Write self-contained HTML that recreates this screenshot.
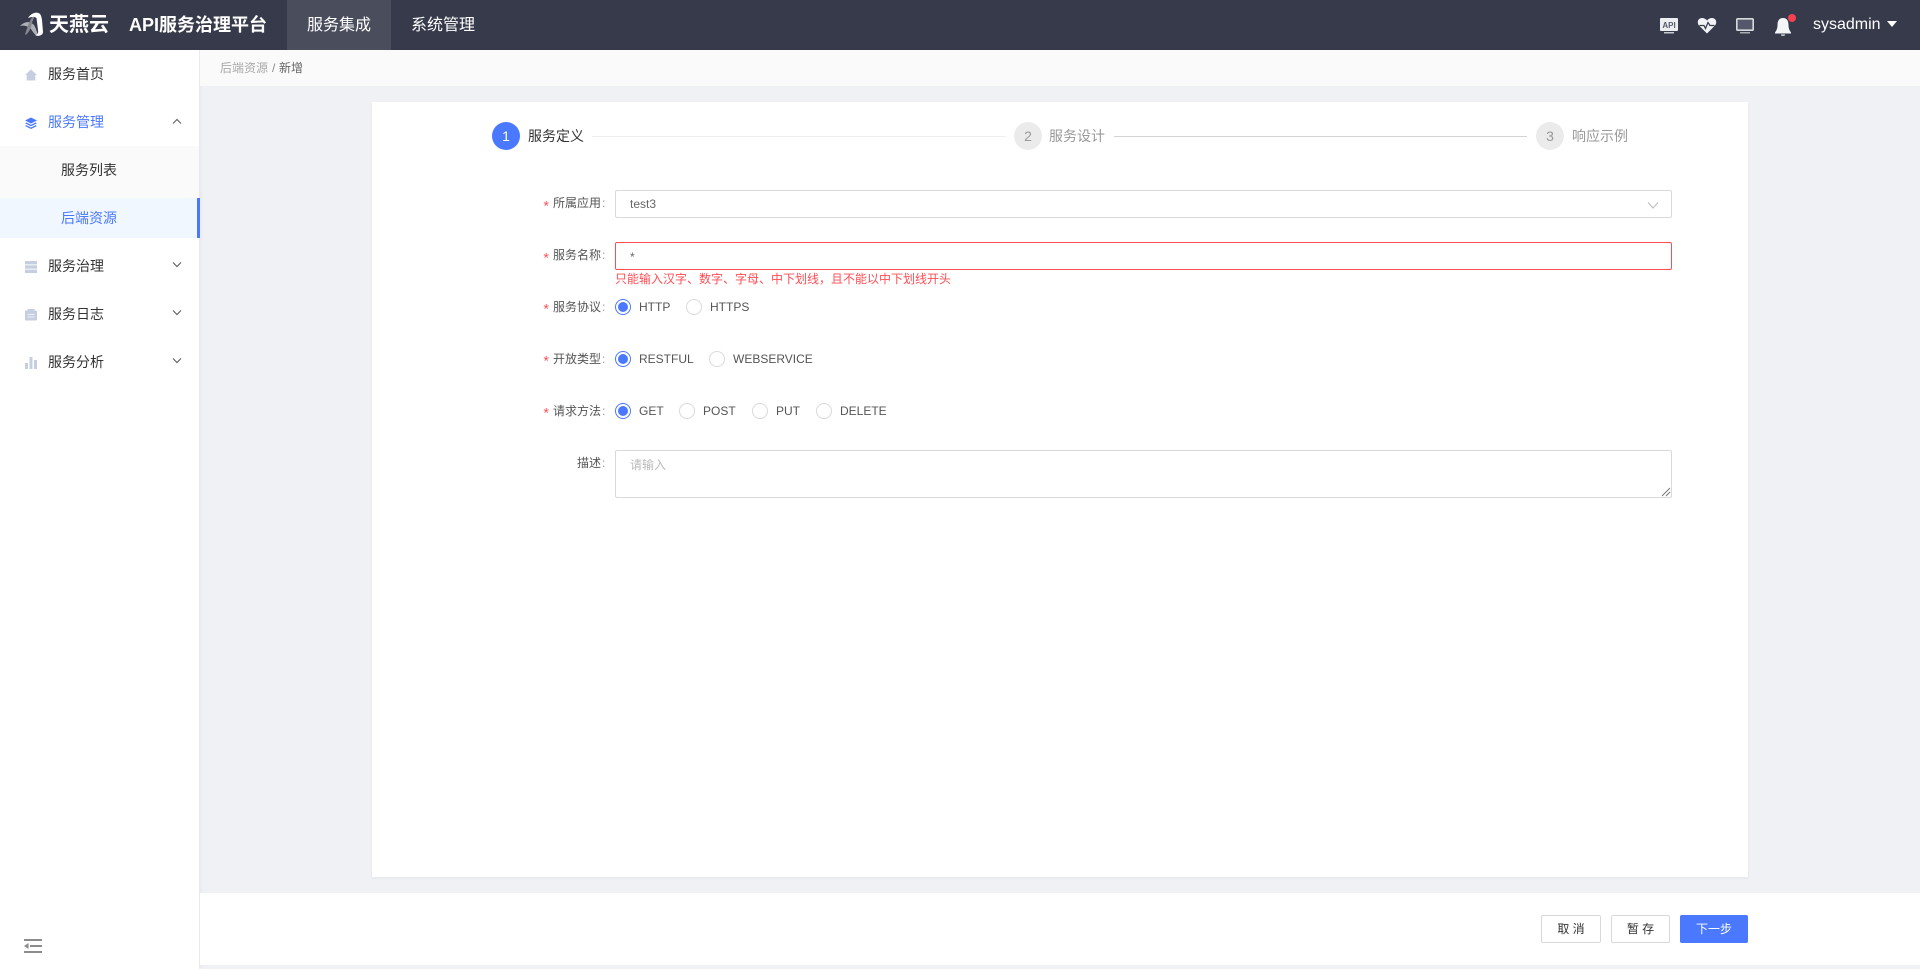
<!DOCTYPE html>
<html lang="zh-CN">
<head>
<meta charset="utf-8">
<title>API服务治理平台</title>
<style>
*{box-sizing:border-box;margin:0;padding:0}
html,body{width:1920px;height:969px;overflow:hidden;background:#f0f1f5}
body{position:relative;font-family:"Liberation Sans","Noto Sans CJK SC",sans-serif;font-size:12px;color:#333}
.a{position:absolute;white-space:nowrap}
.hd{left:0;top:0;width:1920px;height:50px;background:#363a4a}
.side{left:0;top:50px;width:199px;height:919px;background:#fff;box-shadow:2px 0 3px rgba(60,60,100,.05)}
.mi{font-size:14px;line-height:20px;color:#333}
.lb{font-size:12px;line-height:16px;color:#555;left:553px}
.lb i{position:absolute;left:49px;top:0;font-style:normal;color:#999}
.st{color:#ff4d55;left:542px;font-size:14px;line-height:16px;font-family:"Liberation Mono",monospace}
.r{width:16px;height:16px;border-radius:50%;border:1px solid #d9d9d9;background:#fff}
.r.on{border-color:#4a78ff}
.r.on:after{content:"";position:absolute;left:2px;top:2px;width:10px;height:10px;border-radius:50%;background:#4a78ff}
.rt{font-size:12px;line-height:16px;color:#555}
.ipt{left:615px;width:1057px;height:28px;border:1px solid #d9d9d9;border-radius:2px;background:#fff}
.c{width:28px;height:28px;border-radius:50%;top:122px;text-align:center;line-height:28px;font-size:14px;background:#ebebeb;color:#999}
.sl{font-size:14px;line-height:20px;top:126px;color:#999}
.btn{top:915px;height:28px;border:1px solid #d9d9d9;border-radius:2px;background:#fff;text-align:center;line-height:26px;font-size:12px;color:#333}
</style>
</head>
<body>
<div class="a hd"></div>
<div class="a" style="left:287px;top:0;width:104px;height:50px;background:#4a4d5c"></div>
<svg class="a" style="left:16px;top:8px" width="32" height="32" viewBox="0 0 32 32"><path d="M4 18 C9 13 14 13 18 17 C20 20 21 25 23 28 C19 28 17 24 15 21 C12 18 8 17 4 18Z" fill="#aeb0b8"/><path d="M17 8 C14 12 11 19 9 27 C12 26 14 22 15 19 C16 15 17 11 19 8Z" fill="#85878f"/><path d="M12 10 C15 5 21 3 24 6 C25 7 25.500 9 26 12 L27 24 C27 27 23 29 19 27 C22 27 22.500 25 22 22 L20.500 10 C18 8 15 9 12 10Z" fill="#fff"/></svg>
<div class="a" style="left:49px;top:11px;font-size:20px;line-height:28px;font-weight:700;color:#fff">天燕云</div>
<div class="a" style="left:129px;top:12px;font-size:18px;line-height:26px;font-weight:700;color:#fff">API服务治理平台</div>
<div class="a" style="left:307px;top:14px;font-size:16px;line-height:24px;color:#fff">服务集成</div>
<div class="a" style="left:411px;top:14px;font-size:16px;line-height:24px;color:#fff">系统管理</div>

<svg class="a" style="left:1659px;top:17px" width="20" height="18" viewBox="0 0 20 18"><rect x="1" y="1" width="18" height="13" rx="1" fill="#eceef2"/><rect x="5" y="15" width="10" height="1.500" fill="#c8cad2"/><text x="10" y="11" font-size="8" font-weight="700" text-anchor="middle" fill="#5a5d6b" font-family="Liberation Sans">API</text></svg>
<svg class="a" style="left:1697px;top:16px" width="20" height="19" viewBox="0 0 20 19"><path d="M10 17.500 L2 9.500 C-.5 6.500 1 2 5 2 C7 2 9 3 10 4.500 C11 3 13 2 15 2 C19 2 20.500 6.500 18 9.500Z" fill="#f2f3f6"/><path d="M2.500 9.500 H7 L8.500 12.500 L11 6.500 L13 9.500 H17.500" fill="none" stroke="#363a4a" stroke-width="1.200"/></svg>
<svg class="a" style="left:1735px;top:17px" width="20" height="18" viewBox="0 0 20 18"><rect x="1.800" y="1.800" width="16.400" height="11.400" rx="1" fill="#55586a" stroke="#d8d9de" stroke-width="1.600"/><rect x="5" y="15" width="10" height="1.500" fill="#a9abb5"/></svg>
<svg class="a" style="left:1773px;top:16px" width="20" height="22" viewBox="0 0 20 22"><path d="M10 2 C14 2 15.500 5 15.500 9 C15.500 13 17 15 18 16.500 V17.500 H2 V16.500 C3 15 4.500 13 4.500 9 C4.500 5 6 2 10 2Z" fill="#f4f5f7"/><path d="M8 18.500 H12 V19 C12 20 8 20 8 19Z" fill="#f4f5f7"/></svg>
<div class="a" style="left:1788px;top:14px;width:8px;height:8px;border-radius:50%;background:#f5414f"></div>
<div class="a" style="left:1813px;top:15px;font-size:16px;line-height:20px;color:#fff">sysadmin</div>
<div class="a" style="left:1887px;top:21px;width:0;height:0;border-left:5.500px solid transparent;border-right:5.500px solid transparent;border-top:6px solid #fff"></div>

<div class="a side"></div>
<div class="a" style="left:0;top:146px;width:199px;height:52px;background:#fafafa"></div>
<div class="a" style="left:0;top:198px;width:200px;height:40px;background:#f0f7ff"></div>
<div class="a" style="left:197px;top:198px;width:3px;height:40px;background:#4a78ff"></div>

<svg class="a" style="left:25px;top:69px" width="12" height="12" viewBox="0 0 12 12"><path d="M6 .5 L12 6 H10.300 V11.500 H1.700 V6 H0Z" fill="#c5cfe0"/></svg>
<svg class="a" style="left:25px;top:117px" width="12" height="12" viewBox="0 0 12 12"><path d="M6 .5 L12 3.500 L6 6.500 L0 3.500Z" fill="#4a78ff"/><path d="M1.500 5.500 L6 7.800 L10.500 5.500 L12 6.300 L6 9.300 L0 6.300Z" fill="#4a78ff"/><path d="M1.500 8.200 L6 10.500 L10.500 8.200 L12 9 L6 12 L0 9Z" fill="#4a78ff"/></svg>
<svg class="a" style="left:25px;top:261px" width="12" height="12" viewBox="0 0 12 12"><rect y="0" width="12" height="3.400" fill="#c5cfe0"/><rect y="4.300" width="12" height="3.400" fill="#c5cfe0"/><rect y="8.600" width="12" height="3.400" fill="#c5cfe0"/></svg>
<svg class="a" style="left:25px;top:309px" width="12" height="12" viewBox="0 0 12 12"><rect y="1.500" width="12" height="10" rx="1" fill="#c5cfe0"/><rect x="2.500" y="0" width="7" height="2" fill="#c5cfe0"/><rect x="2.500" y="5" width="7" height="1" fill="#eef1f6"/><rect x="2.500" y="7.500" width="7" height="1" fill="#eef1f6"/></svg>
<svg class="a" style="left:25px;top:357px" width="12" height="12" viewBox="0 0 12 12"><rect x="0" y="6" width="3" height="6" fill="#c5cfe0"/><rect x="4.500" y="0" width="3" height="12" fill="#c5cfe0"/><rect x="9" y="3" width="3" height="9" fill="#c5cfe0"/></svg>

<div class="a mi" style="left:48px;top:64px">服务首页</div>
<div class="a mi" style="left:48px;top:112px;color:#4a78ff">服务管理</div>
<div class="a mi" style="left:61px;top:160px">服务列表</div>
<div class="a mi" style="left:61px;top:208px;color:#4a78ff">后端资源</div>
<div class="a mi" style="left:48px;top:256px">服务治理</div>
<div class="a mi" style="left:48px;top:304px">服务日志</div>
<div class="a mi" style="left:48px;top:352px">服务分析</div>

<svg class="a" style="left:172px;top:118px" width="10" height="7" viewBox="0 0 10 7"><path d="M1 5.500 L5 1.500 L9 5.500" fill="none" stroke="#666" stroke-width="1.200"/></svg>
<svg class="a" style="left:172px;top:261px" width="10" height="7" viewBox="0 0 10 7"><path d="M1 1.500 L5 5.500 L9 1.500" fill="none" stroke="#666" stroke-width="1.200"/></svg>
<svg class="a" style="left:172px;top:309px" width="10" height="7" viewBox="0 0 10 7"><path d="M1 1.500 L5 5.500 L9 1.500" fill="none" stroke="#666" stroke-width="1.200"/></svg>
<svg class="a" style="left:172px;top:357px" width="10" height="7" viewBox="0 0 10 7"><path d="M1 1.500 L5 5.500 L9 1.500" fill="none" stroke="#666" stroke-width="1.200"/></svg>

<svg class="a" style="left:24px;top:938px" width="18" height="16" viewBox="0 0 18 16"><rect y="1" width="18" height="2" fill="#8c8c8c"/><rect x="6" y="7" width="12" height="2" fill="#8c8c8c"/><rect y="13" width="18" height="2" fill="#8c8c8c"/><path d="M0 8 L4.500 5 V11Z" fill="#8c8c8c"/></svg>

<div class="a" style="left:200px;top:50px;width:1720px;height:36px;background:#fafafa"></div>
<div class="a" style="left:220px;top:60px;font-size:12px;line-height:16px;color:#aaa">后端资源</div>
<div class="a" style="left:272px;top:60px;font-size:12px;line-height:16px;color:#888">/</div>
<div class="a" style="left:279px;top:60px;font-size:12px;line-height:16px;color:#666">新增</div>

<div class="a" style="left:372px;top:102px;width:1376px;height:775px;background:#fff;box-shadow:0 1px 3px rgba(0,0,0,.05)"></div>

<div class="a c" style="left:492px;background:#4a78ff;color:#fff">1</div>
<div class="a sl" style="left:528px;color:#333">服务定义</div>
<div class="a" style="left:592px;top:136px;width:414px;height:1px;background:#eee"></div>
<div class="a c" style="left:1014px">2</div>
<div class="a sl" style="left:1049px">服务设计</div>
<div class="a" style="left:1114px;top:136px;width:413px;height:1px;background:#d4d4d4"></div>
<div class="a c" style="left:1536px">3</div>
<div class="a sl" style="left:1572px">响应示例</div>

<div class="a st" style="top:200px">*</div><div class="a lb" style="top:195px">所属应用<i>:</i></div>
<div class="a ipt" style="top:190px"></div>
<div class="a" style="left:630px;top:196px;line-height:16px;color:#666">test3</div>
<svg class="a" style="left:1647px;top:202px" width="12" height="7" viewBox="0 0 12 7"><path d="M1 .5 L6 6 L11 .5" fill="none" stroke="#bbb" stroke-width="1"/></svg>

<div class="a st" style="top:252px">*</div><div class="a lb" style="top:247px">服务名称<i>:</i></div>
<div class="a ipt" style="top:242px;border-color:#ff4d55"></div>
<div class="a" style="left:630px;top:249px;line-height:16px;color:#666">*</div>
<div class="a" style="left:615px;top:271px;line-height:16px;color:#ff4d55">只能输入汉字、数字、字母、中下划线，且不能以中下划线开头</div>

<div class="a st" style="top:303px">*</div><div class="a lb" style="top:299px">服务协议<i>:</i></div>
<div class="a r on" style="left:615px;top:299px"></div><div class="a rt" style="left:639px;top:299px">HTTP</div>
<div class="a r" style="left:686px;top:299px"></div><div class="a rt" style="left:710px;top:299px">HTTPS</div>

<div class="a st" style="top:355px">*</div><div class="a lb" style="top:351px">开放类型<i>:</i></div>
<div class="a r on" style="left:615px;top:351px"></div><div class="a rt" style="left:639px;top:351px">RESTFUL</div>
<div class="a r" style="left:709px;top:351px"></div><div class="a rt" style="left:733px;top:351px">WEBSERVICE</div>

<div class="a st" style="top:407px">*</div><div class="a lb" style="top:403px">请求方法<i>:</i></div>
<div class="a r on" style="left:615px;top:403px"></div><div class="a rt" style="left:639px;top:403px">GET</div>
<div class="a r" style="left:679px;top:403px"></div><div class="a rt" style="left:703px;top:403px">POST</div>
<div class="a r" style="left:752px;top:403px"></div><div class="a rt" style="left:776px;top:403px">PUT</div>
<div class="a r" style="left:816px;top:403px"></div><div class="a rt" style="left:840px;top:403px">DELETE</div>

<div class="a lb" style="top:455px;left:577px">描述<i style="left:25px">:</i></div>
<div class="a ipt" style="top:450px;height:48px"></div>
<div class="a" style="left:630px;top:457px;line-height:16px;color:#bbb">请输入</div>
<svg class="a" style="left:1661px;top:487px" width="10" height="10" viewBox="0 0 10 10"><path d="M1 9 L9 1 M5 9 L9 5" stroke="#777" stroke-width="1"/></svg>

<div class="a" style="left:200px;top:893px;width:1720px;height:72px;background:#fff"></div>
<div class="a btn" style="left:1541px;width:60px">取 消</div>
<div class="a btn" style="left:1611px;width:59px">暂 存</div>
<div class="a btn" style="left:1680px;width:68px;background:#4a78ff;border-color:#4a78ff;color:#fff">下一步</div>
</body>
</html>
